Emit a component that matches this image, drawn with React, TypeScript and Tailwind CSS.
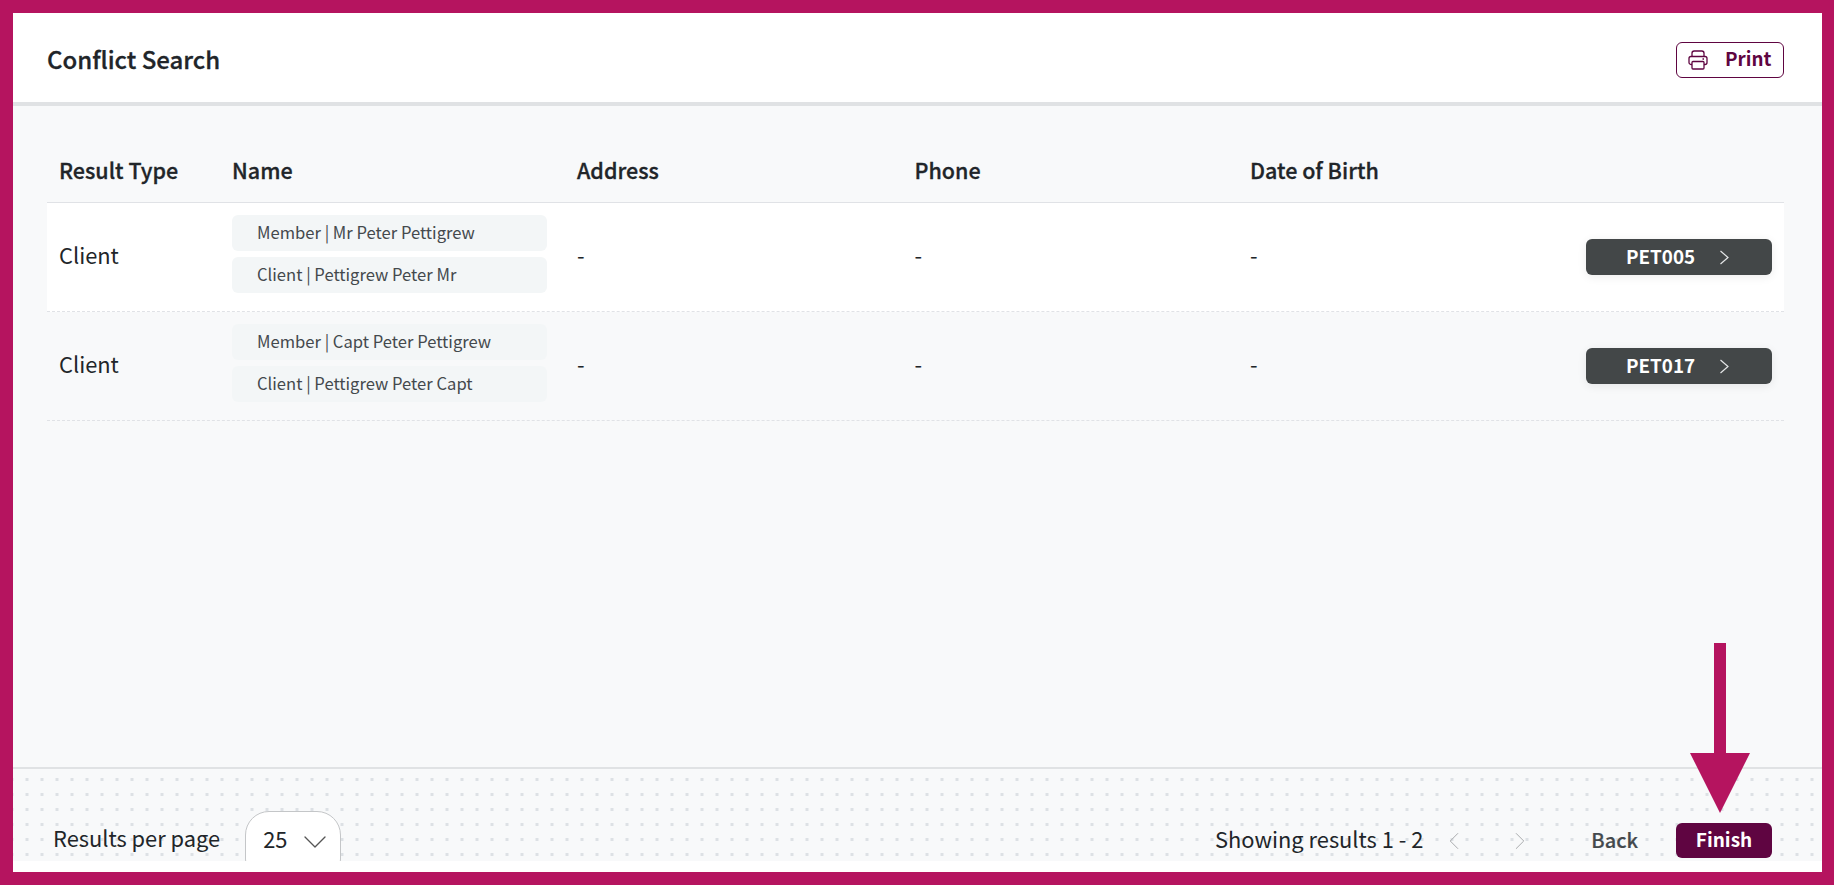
import React from 'react';
import { ChevronDown, ChevronLeft, ChevronRight } from 'lucide-react';

const rows = [
    { type: 'Client', names: ['Member | Mr Peter Pettigrew', 'Client | Pettigrew Peter Mr'], code: 'PET005', bg: 'bg-white' },
    { type: 'Client', names: ['Member | Capt Peter Pettigrew', 'Client | Pettigrew Peter Capt'], code: 'PET017', bg: '' },
];

const cols = 'grid grid-cols-[185px_345px_337.5px_335.5px_1fr]';

export default function App() {
    return (
        <div className="relative h-screen w-full overflow-hidden bg-[#b5145f] pt-[13px] pb-[13px] pl-[13px] pr-[12px] font-['Noto_Sans_CJK_JP','Noto_Sans',sans-serif] text-[#212529]">
            <div className="flex h-full flex-col bg-white">
                <header className="flex h-[93px] shrink-0 items-start justify-between border-b-4 border-[#e0e2e4] pl-[34px] pr-[38px] pt-[29px]">
                    <h1 className="mt-[-1px] text-[24px] font-medium leading-[36px] [-webkit-text-stroke:0.3px]">Conflict Search</h1>
                    <button className="flex h-[36px] w-[108px] items-center rounded-md border border-[#5f0541] pl-[10.5px] text-[#5f0541]">
                        <svg width="20" height="20" viewBox="0 0 20 20" fill="none" stroke="currentColor" strokeWidth="1.3">
                            <path d="M4 6.5V3.2C4 2 5 1 6.2 1h7.6C15 1 16 2 16 3.2v3.3" />
                            <rect x="1" y="6.5" width="18" height="8" rx="2" />
                            <rect x="4" y="11.5" width="12" height="7.5" rx="1" fill="white" />
                            <path d="M14.5 9h1.5" />
                        </svg>
                        <span className="ml-[17.5px] mt-[-4px] text-[18.8px] font-bold leading-none">Print</span>
                    </button>
                </header>

                <main className="flex-1 bg-[#f8f9fa] pl-[34px] pr-[38px] pt-[33px]">
                    <div className={`${cols} h-[64px] items-center border-b border-[#e0e2e6] text-[21.5px] font-medium [-webkit-text-stroke:0.3px]`}>
                        <div className="pl-3">Result Type</div>
                        <div>Name</div>
                        <div>Address</div>
                        <div>Phone</div>
                        <div>Date of Birth</div>
                    </div>
                    {rows.map((row) => (
                        <div key={row.code} className={`${cols} h-[109px] items-center border-b border-dashed border-[#e0e2e6] ${row.bg} text-[21.85px]`}>
                            <div className="mt-[-4px] pl-3">{row.type}</div>
                            <div className="mb-[6px] flex w-[315px] flex-col gap-[6px]">
                                {row.names.map((name) => (
                                    <div key={name} className="flex h-[36px] items-center rounded-md bg-[#f3f6f7] pb-[2px] pl-[25px] text-[16.6px] text-[#44494d]">
                                        {name}
                                    </div>
                                ))}
                            </div>
                            <div className="mt-[-4px]">-</div>
                            <div className="mt-[-4px]">-</div>
                            <div className="flex items-center justify-between pr-3">
                                <span className="mt-[-4px]">-</span>
                                <button className="flex h-[36px] w-[186px] items-center rounded-md bg-[#434748] pl-[40px] text-[18.8px] font-bold text-white shadow-[0_2px_10px_rgba(0,0,0,0.08)]">
                                    <span className="mt-[-2px]">{row.code}</span>
                                    <svg width="11" height="15" viewBox="0 0 11 15" fill="none" className="ml-[24px]">
                                        <path d="M1.5 1l7.5 6.5-7.5 6.5" stroke="#e4e6e7" strokeWidth="1.2" />
                                    </svg>
                                </button>
                            </div>
                        </div>
                    ))}
                </main>

                <footer className="flex h-[94px] shrink-0 items-end justify-between overflow-hidden border-t-2 border-[#e0e2e4] bg-[#f8f9fa] bg-[radial-gradient(#dde1e5_1.6px,transparent_1.6px)] bg-[length:15px_15px] bg-[position:-8.5px_3px] pl-[40px] pr-[50px]">
                    <div className="flex items-start">
                        <span className="mb-[6px] self-end text-[21.85px]">Results per page</span>
                        <div className="mb-[-22px] ml-[25px] flex h-[72px] w-[96px] items-start rounded-[24px] border border-[#c4c6c8] bg-white pl-[17px] pt-[11px]">
                            <span className="text-[21.85px] leading-[32px]">25</span>
                            <ChevronDown size={40} strokeWidth={0.8} className="ml-[8px] mt-[-1px] text-[#555]" />
                        </div>
                    </div>
                    <div className="flex items-center pb-[3px]">
                        <span className="mt-[-2px] text-[21.85px]">Showing results 1 - 2</span>
                        <ChevronLeft size={30} strokeWidth={0.8} className="ml-[16px] text-[#aaacae]" />
                        <ChevronRight size={30} strokeWidth={0.8} className="ml-[36px] text-[#aaacae]" />
                        <span className="ml-[56px] mt-[-2px] text-[20px] font-medium text-[#44494d] [-webkit-text-stroke:0.2px]">Back</span>
                        <button className="ml-[38px] flex h-[35px] w-[96px] items-center justify-center rounded-md bg-[#5f0541] text-[19px] font-bold text-white">
                            <span className="mt-[-2px]">Finish</span>
                        </button>
                    </div>
                </footer>
                <div className="h-[11px] shrink-0 bg-white" />
            </div>

            <svg className="absolute left-[1690px] top-[643px]" width="60" height="170" viewBox="0 0 60 170">
                <path d="M24 0h12v110h24L30 170 0 110h24z" fill="#b5145f" />
            </svg>
        </div>
    );
}
